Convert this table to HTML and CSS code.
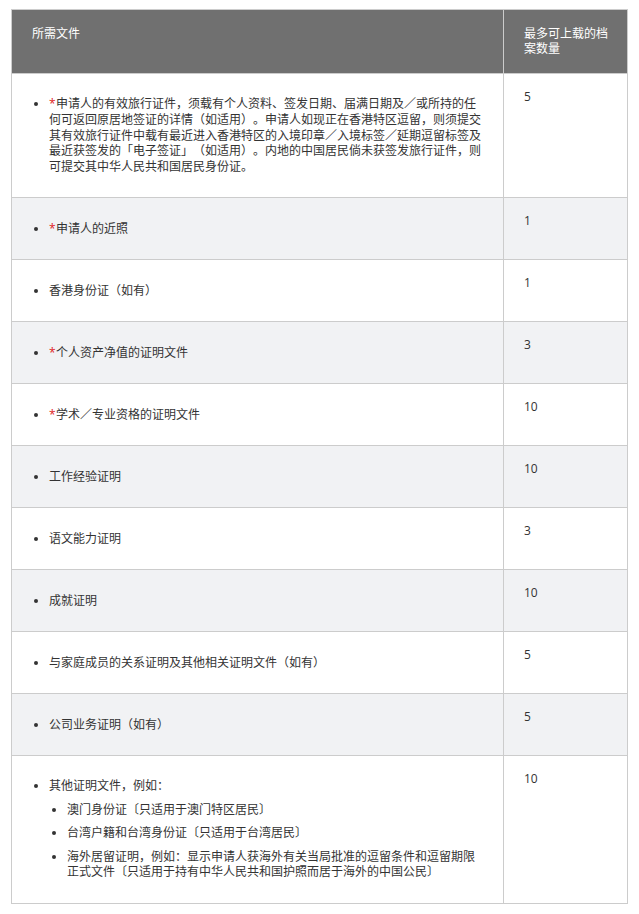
FILE: index.html
```html
<!DOCTYPE html>
<html lang="zh-Hans">
<head>
<meta charset="utf-8">
<title>所需文件</title>
<link rel="stylesheet" href="styles.css">
</head>
<body>
<div class="wrap">
<table class="docs">
  <colgroup>
    <col class="col-doc">
    <col class="col-num">
  </colgroup>
  <thead>
    <tr>
      <th>所需文件</th>
      <th>最多可上载的档案数量</th>
    </tr>
  </thead>
  <tbody>
    <tr>
      <td><ul class="list"><li><span class="req">*</span>申请人的有效旅行证件，须载有个人资料、签发日期、届满日期及／或所持的任何可返回原居地签证的详情（如适用）。申请人如现正在香港特区逗留，则须提交其有效旅行证件中载有最近进入香港特区的入境印章／入境标签／延期逗留标签及最近获签发的「电子签证」（如适用）。内地的中国居民倘未获签发旅行证件，则可提交其中华人民共和国居民身份证。</li></ul></td>
      <td class="num">5</td>
    </tr>
    <tr>
      <td><ul class="list"><li><span class="req">*</span>申请人的近照</li></ul></td>
      <td class="num">1</td>
    </tr>
    <tr>
      <td><ul class="list"><li>香港身份证（如有）</li></ul></td>
      <td class="num">1</td>
    </tr>
    <tr>
      <td><ul class="list"><li><span class="req">*</span>个人资产净值的证明文件</li></ul></td>
      <td class="num">3</td>
    </tr>
    <tr>
      <td><ul class="list"><li><span class="req">*</span>学术／专业资格的证明文件</li></ul></td>
      <td class="num">10</td>
    </tr>
    <tr>
      <td><ul class="list"><li>工作经验证明</li></ul></td>
      <td class="num">10</td>
    </tr>
    <tr>
      <td><ul class="list"><li>语文能力证明</li></ul></td>
      <td class="num">3</td>
    </tr>
    <tr>
      <td><ul class="list"><li>成就证明</li></ul></td>
      <td class="num">10</td>
    </tr>
    <tr>
      <td><ul class="list"><li>与家庭成员的关系证明及其他相关证明文件（如有）</li></ul></td>
      <td class="num">5</td>
    </tr>
    <tr>
      <td><ul class="list"><li>公司业务证明（如有）</li></ul></td>
      <td class="num">5</td>
    </tr>
    <tr>
      <td><ul class="list"><li>其他证明文件，例如：
        <ul class="sublist">
          <li>澳门身份证〔只适用于澳门特区居民〕</li>
          <li>台湾户籍和台湾身份证〔只适用于台湾居民〕</li>
          <li>海外居留证明，例如：显示申请人获海外有关当局批准的逗留条件和逗留期限正式文件〔只适用于持有中华人民共和国护照而居于海外的中国公民〕</li>
        </ul>
      </li></ul></td>
      <td class="num">10</td>
    </tr>
  </tbody>
</table>
</div>
</body>
</html>
```

FILE: styles.css
```css
html, body {
  margin: 0;
  padding: 0;
  background: #ffffff;
}

body {
  font-family: "Open Sans", "Noto Sans CJK SC", sans-serif;
  font-size: 12px;
  line-height: 15.75px;
  color: #333333;
  text-spacing-trim: space-all;
}

.wrap {
  padding: 9px 12px 0 11px;
}

.docs {
  border-collapse: collapse;
  table-layout: fixed;
  width: 616px;
}

.col-doc {
  width: 492px;
}

.col-num {
  width: 124px;
}

.docs th,
.docs td {
  border: 1px solid #cccccc;
  text-align: left;
  vertical-align: top;
}

.docs th {
  background: #707070;
  color: #ffffff;
  font-weight: normal;
  padding: 15.5px 15px 15.5px 20px;
}

.docs td {
  padding: 15px 20px;
}

.docs tbody tr:nth-child(even) td {
  background: #f1f2f4;
}

.list {
  margin: 0;
  padding: 0 0 0 17px;
  list-style: disc;
}

.list li {
  margin: 7.6px 0;
}

.sublist {
  margin: 0;
  padding: 0 0 0 18px;
  list-style: disc;
}

.req {
  color: #e02020;
  margin-right: 0.5px;
}

.num {
  color: #333333;
}
```
